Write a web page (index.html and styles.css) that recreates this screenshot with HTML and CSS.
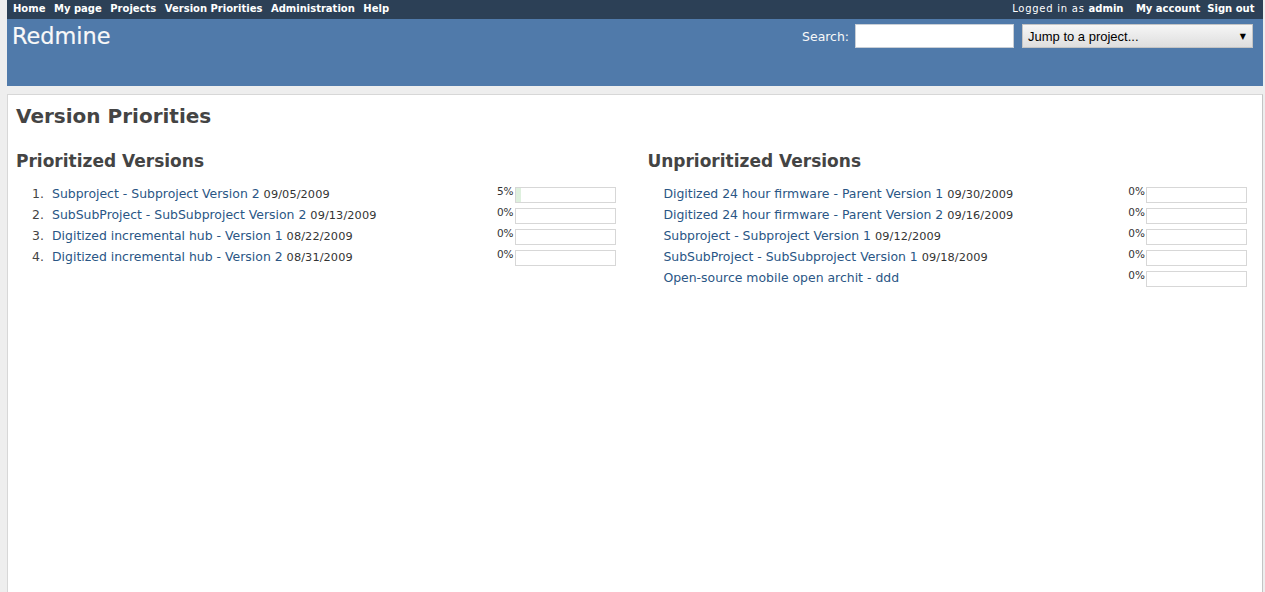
FILE: index.html
```html
<!DOCTYPE html>
<html>
<head>
<meta charset="utf-8">
<title>Redmine - Version Priorities</title>
<link rel="stylesheet" href="styles.css">
</head>
<body>
<div class="wrapper">
  <div class="top-menu">
    <nav class="menu-left">
      <a href="#">Home</a>
      <a href="#">My page</a>
      <a href="#">Projects</a>
      <a href="#">Version Priorities</a>
      <a href="#">Administration</a>
      <a href="#">Help</a>
    </nav>
    <div class="menu-right">
      <span class="loggedas"><span class="logged-label">Logged in as </span><a href="#">admin</a></span>
      <a href="#" class="acc">My account</a>
      <a href="#" class="acc">Sign out</a>
    </div>
  </div>
  <div class="header">
    <h1 class="site-title">Redmine</h1>
    <div class="quick-search">
      <label class="search-label">Search:</label>
      <input class="search-input" type="text">
      <div class="jump"><span>Jump to a project...</span><span class="arrow">▼</span></div>
    </div>
  </div>
  <div class="main">
    <div class="content">
      <h2 class="page-title">Version Priorities</h2>
      <div class="split">
        <div class="col">
          <h3 class="col-title">Prioritized Versions</h3>
          <ol class="versions numbered">
            <li class="row"><span class="item"><a href="#">Subproject - Subproject Version 2</a> <span class="date">09/05/2009</span></span><span class="pct">5%</span><span class="bar"><span class="fill" style="width:5%"></span></span></li>
            <li class="row"><span class="item"><a href="#">SubSubProject - SubSubproject Version 2</a> <span class="date">09/13/2009</span></span><span class="pct">0%</span><span class="bar"></span></li>
            <li class="row"><span class="item"><a href="#">Digitized incremental hub - Version 1</a> <span class="date">08/22/2009</span></span><span class="pct">0%</span><span class="bar"></span></li>
            <li class="row"><span class="item"><a href="#">Digitized incremental hub - Version 2</a> <span class="date">08/31/2009</span></span><span class="pct">0%</span><span class="bar"></span></li>
          </ol>
        </div>
        <div class="col">
          <h3 class="col-title">Unprioritized Versions</h3>
          <ul class="versions plain">
            <li class="row"><span class="item"><a href="#">Digitized 24 hour firmware - Parent Version 1</a> <span class="date">09/30/2009</span></span><span class="pct">0%</span><span class="bar"></span></li>
            <li class="row"><span class="item"><a href="#">Digitized 24 hour firmware - Parent Version 2</a> <span class="date">09/16/2009</span></span><span class="pct">0%</span><span class="bar"></span></li>
            <li class="row"><span class="item"><a href="#">Subproject - Subproject Version 1</a> <span class="date">09/12/2009</span></span><span class="pct">0%</span><span class="bar"></span></li>
            <li class="row"><span class="item"><a href="#">SubSubProject - SubSubproject Version 1</a> <span class="date">09/18/2009</span></span><span class="pct">0%</span><span class="bar"></span></li>
            <li class="row"><span class="item"><a href="#">Open-source mobile open archit - ddd</a></span><span class="pct">0%</span><span class="bar"></span></li>
          </ul>
        </div>
      </div>
    </div>
  </div>
</div>
</body>
</html>
```

FILE: styles.css
```css
html, body {
  margin: 0;
  padding: 0;
}
body {
  background: #eeeeee;
  font-family: "DejaVu Sans", Verdana, sans-serif;
  font-size: 12.45px;
  color: #333;
  overflow: hidden;
}
a {
  color: #2a5685;
  text-decoration: none;
}

.wrapper {
  margin: 0 2px 0 7px;
}

/* top menu */
.top-menu {
  height: 19px;
  box-sizing: border-box;
  padding: 1px 8.5px 0 6px;
  background: #2c4056;
  color: #fff;
  font-size: 10px;
  line-height: 16px;
  display: flex;
  justify-content: space-between;
}
.menu-left {
  display: flex;
  gap: 8.5px;
}
.top-menu a {
  color: #fff;
  font-weight: bold;
}
.menu-right {
  display: flex;
}
.loggedas {
  margin-right: 12.4px;
}
.logged-label {
  letter-spacing: 0.75px;
}
.acc + .acc {
  margin-left: 7px;
}

/* header */
.header {
  height: 67px;
  box-sizing: border-box;
  padding: 4px 10px 0 5px;
  background: #507aaa;
  color: #f8f8f8;
  display: flex;
  justify-content: space-between;
  align-items: flex-start;
}
.site-title {
  margin: 0;
  font-size: 22.4px;
  line-height: 26px;
  font-weight: normal;
  color: #f8f8f8;
  -webkit-text-stroke: 0.2px #f8f8f8;
}
.quick-search {
  display: flex;
  align-items: center;
  margin-top: 1px;
}
.search-label {
  margin-right: 6px;
  color: #f8f8f8;
}
.search-input {
  width: 159px;
  height: 24px;
  box-sizing: border-box;
  border: 1px solid #c9cfd6;
  background: #fff;
  margin: 0 8px 0 0;
  padding: 0;
}
.jump {
  width: 231px;
  height: 24px;
  box-sizing: border-box;
  border: 1px solid #c4c4c4;
  background: linear-gradient(#f6f6f6, #dedede);
  font-family: "Liberation Sans", Arial, sans-serif;
  font-size: 13px;
  color: #000;
  display: flex;
  align-items: center;
  justify-content: space-between;
  padding: 0 6px 0 5px;
}
.arrow {
  font-size: 8px;
  font-family: "DejaVu Sans", sans-serif;
}

/* main */
.main {
  padding-top: 8px;
}
.content {
  background: #fff;
  border: 1px solid #d7d7d7;
  border-right-color: #c4c4c4;
  min-height: 600px;
  padding: 9px 8px 0 8px;
}
.page-title {
  margin: 0;
  font-size: 20px;
  line-height: 24px;
  font-weight: bold;
  color: #444;
}
.split {
  display: flex;
  justify-content: space-between;
}
.col {
  width: 49%;
}
.col-title {
  margin: 23px 0 0;
  font-size: 17px;
  line-height: 20px;
  font-weight: bold;
  color: #444;
}
.versions {
  list-style: none;
  margin: 12px 0 0;
  padding: 0;
}
.plain {
  padding-left: 16px;
}
.numbered {
  counter-reset: vp;
}
.row {
  display: flex;
  align-items: flex-start;
  height: 21px;
  line-height: 21px;
  padding-right: 7px;
}
.numbered .row::before {
  counter-increment: vp;
  content: counter(vp) ".";
  width: 28px;
  margin-right: 8px;
  text-align: right;
  color: #444;
  flex: none;
}
.item {
  flex: 1;
  white-space: nowrap;
}
.date {
  font-size: 11.3px;
  letter-spacing: 0.1px;
  color: #333;
}
.pct {
  font-size: 10.5px;
  line-height: 16px;
  margin-right: 1px;
  color: #333;
}
.bar {
  width: 101px;
  height: 16px;
  box-sizing: border-box;
  border: 1px solid #d7d7d7;
  margin-top: 4px;
  background: #fff;
  display: flex;
}
.fill {
  background: #def0de;
  height: 100%;
}
```
